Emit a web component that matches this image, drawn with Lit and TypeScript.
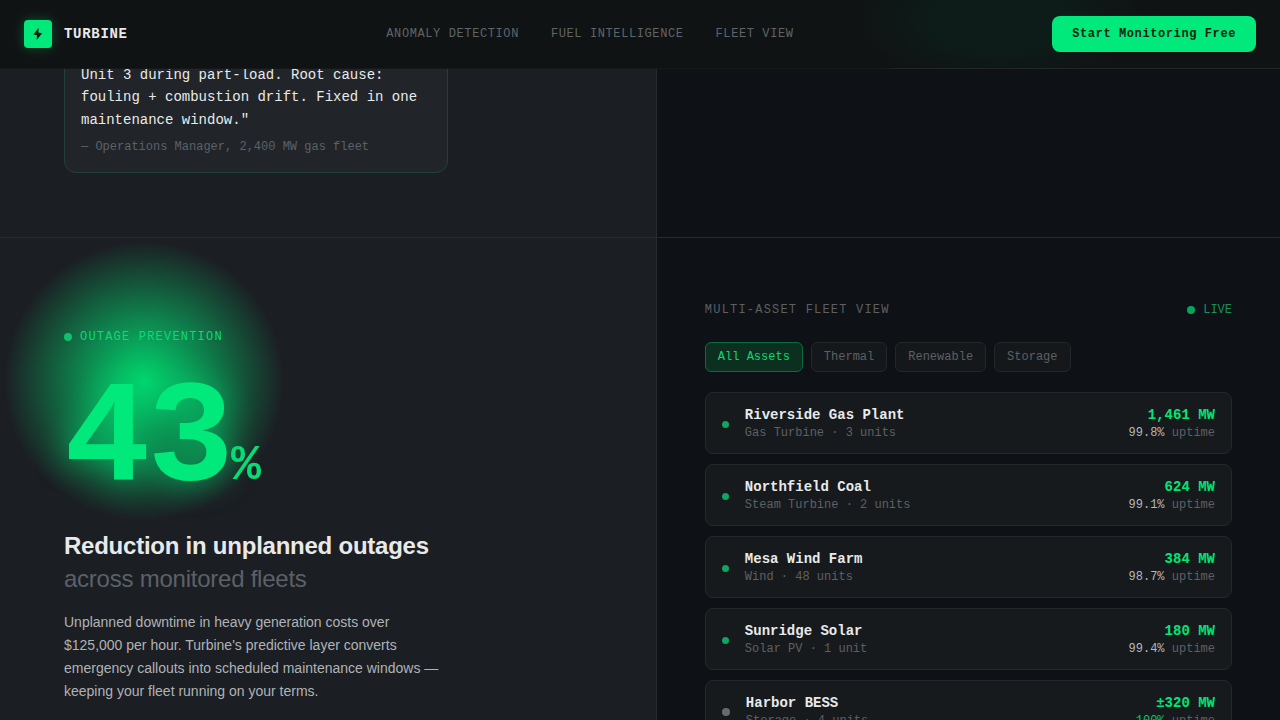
import { LitElement, html, css } from "lit";
import { customElement, property, state } from "lit/decorators.js";
import { classMap } from "lit/directives/class-map.js";

interface Asset {
  name: string;
  kind: string;
  group: string;
  units: string;
  output: string;
  uptime: string;
  idle?: boolean;
}

const ASSETS: Asset[] = [
  { name: "Riverside Gas Plant", kind: "Gas Turbine", group: "Thermal", units: "3 units", output: "1,461 MW", uptime: "99.8%" },
  { name: "Northfield Coal", kind: "Steam Turbine", group: "Thermal", units: "2 units", output: "624 MW", uptime: "99.1%" },
  { name: "Mesa Wind Farm", kind: "Wind", group: "Renewable", units: "48 units", output: "384 MW", uptime: "98.7%" },
  { name: "Sunridge Solar", kind: "Solar PV", group: "Renewable", units: "1 unit", output: "180 MW", uptime: "99.4%" },
  { name: "Harbor BESS", kind: "Storage", group: "Storage", units: "4 units", output: "±320 MW", uptime: "100%", idle: true },
];

const FILTERS = ["All Assets", "Thermal", "Renewable", "Storage"];

@customElement("site-header")
class SiteHeader extends LitElement {
  static styles = css`
    :host {
      display: block;
    }
    .bar {
      display: flex;
      align-items: center;
      justify-content: space-between;
      padding: 16px 24px;
      background:
        radial-gradient(ellipse 140px 64px at 1000px 20px, #0d1c18 0%, #0d1c18 50%, transparent 100%),
        #101314;
      border-bottom: 1px solid;
      border-image: linear-gradient(to right, #15191b 69%, #222625 70%) 1;
    }
    .brand {
      display: flex;
      align-items: center;
      gap: 12px;
      color: #e8eaea;
      font-size: 14px;
      font-weight: 700;
      letter-spacing: 0.05em;
      text-decoration: none;
    }
    .mark {
      display: grid;
      place-items: center;
      width: 28px;
      height: 28px;
      border-radius: 4px;
      background: #00e97a;
      box-shadow: 0 0 12px rgba(0, 233, 122, 0.3);
    }
    .links {
      display: flex;
      gap: 32px;
    }
    .link {
      color: #5f6468;
      font-size: 12px;
      letter-spacing: 0.05em;
      text-decoration: none;
      text-transform: uppercase;
    }
    .cta {
      height: 36px;
      padding: 0 20px;
      border: 0;
      border-radius: 8px;
      background: #00e97a;
      color: #06270f;
      font: 700 12px "Liberation Mono", monospace;
      letter-spacing: 0.05em;
    }
  `;

  render() {
    return html`
      <header class="bar">
        <a class="brand" href="#top">
          <span class="mark">
            <svg width="14" height="14" viewBox="0 0 14 14" aria-hidden="true">
              <path d="M7.6 0.8 L2.4 7.4 L6 8.2 L5.6 13 L11.2 6.3 L7.4 5.6 Z" fill="#06200f" />
            </svg>
          </span>
          <span>TURBINE</span>
        </a>
        <nav class="links">
          <a class="link" href="#anomaly">Anomaly Detection</a>
          <a class="link" href="#fuel">Fuel Intelligence</a>
          <a class="link" href="#fleet">Fleet View</a>
        </nav>
        <button class="cta" type="button">Start Monitoring Free</button>
      </header>
    `;
  }
}

@customElement("asset-card")
class AssetCard extends LitElement {
  @property({ attribute: false }) asset!: Asset;

  static styles = css`
    :host {
      display: block;
    }
    .card {
      display: flex;
      align-items: center;
      gap: 16px;
      padding: 13px 16px 11px;
      border: 1px solid #25292b;
      border-radius: 8px;
      background: #171a1d;
      font-size: 12px;
      line-height: 18px;
      color: #5c6064;
    }
    .dot {
      width: 7px;
      height: 7px;
      border-radius: 50%;
      background: #0fa660;
    }
    .dot.idle {
      width: 8px;
      height: 8px;
      background: #66696e;
    }
    .info {
      flex: 1;
    }
    .name,
    .output {
      font-size: 14px;
      font-weight: 700;
    }
    .name {
      color: #e8eaea;
    }
    .figures {
      text-align: right;
    }
    .output {
      color: #00e676;
    }
    .uptime {
      color: #b4b8ba;
    }
    .uptime.full {
      color: #00c968;
    }
  `;

  render() {
    const a = this.asset;
    return html`
      <div class="card">
        <span class=${classMap({ dot: true, idle: !!a.idle })}></span>
        <div class="info">
          <div class="name">${a.name}</div>
          <div>${a.kind} · ${a.units}</div>
        </div>
        <div class="figures">
          <div class="output">${a.output}</div>
          <div><span class=${classMap({ uptime: true, full: a.uptime === "100%" })}>${a.uptime}</span> uptime</div>
        </div>
      </div>
    `;
  }
}

@customElement("fleet-view")
class FleetView extends LitElement {
  @state() private active = "All Assets";

  static styles = css`
    :host {
      display: block;
      padding: 64px 48px;
      background: #0e1115;
    }
    .head,
    .live,
    .filters {
      display: flex;
      align-items: center;
      gap: 8px;
    }
    .head {
      justify-content: space-between;
      margin-bottom: 24px;
      color: #5c6064;
      font-size: 12px;
      line-height: 16px;
    }
    .title {
      margin: 0;
      font-size: 12px;
      font-weight: 400;
      letter-spacing: 0.1em;
      text-transform: uppercase;
    }
    .live {
      color: #1a8f5a;
    }
    .dot {
      width: 8px;
      height: 8px;
      border-radius: 50%;
      background: #06a75c;
    }
    .filters {
      margin-bottom: 20px;
    }
    .filter {
      height: 30px;
      padding: 0 12px;
      border: 1px solid #232729;
      border-radius: 6px;
      background: #15181b;
      color: #5c6064;
      font: 12px "Liberation Mono", monospace;
    }
    .filter.active {
      border-color: #0b6b40;
      background: #0b3020;
      color: #14d474;
    }
    .assets {
      display: grid;
      gap: 10px;
      margin: 0;
      padding: 0;
      list-style: none;
    }
  `;

  render() {
    const shown = ASSETS.filter((a) => this.active === "All Assets" || a.group === this.active);
    return html`
      <div class="head">
        <h2 class="title">Multi-Asset Fleet View</h2>
        <span class="live"><span class="dot"></span>LIVE</span>
      </div>
      <div class="filters">
        ${FILTERS.map(
          (f) => html`<button
            type="button"
            class=${classMap({ filter: true, active: f === this.active })}
            @click=${() => (this.active = f)}
          >${f}</button>`,
        )}
      </div>
      <ul class="assets">
        ${shown.map((a) => html`<li><asset-card .asset=${a}></asset-card></li>`)}
      </ul>
    `;
  }
}

@customElement("app-root")
class AppRoot extends LitElement {
  static styles = css`
    :host {
      display: flex;
      flex-direction: column;
      height: 100vh;
      overflow: hidden;
      background: #0e1115;
      font-family: "Liberation Mono", monospace;
    }
    .content {
      flex: 1;
      min-height: 0;
      overflow: hidden;
      display: grid;
      grid-template-rows: 169px auto;
    }
    .split {
      display: grid;
      grid-template-columns: 39fr 37fr;
      min-height: 0;
    }
    .split.first {
      border-bottom: 1px solid #282b2e;
    }
    .panel {
      border-right: 1px solid #282b2e;
      background: #1b1e23;
    }
    .story {
      display: flex;
      align-items: flex-end;
      padding: 0 64px 64px;
      overflow: hidden;
    }
    .quote {
      width: 384px;
      box-sizing: border-box;
      margin: 0;
      padding: 16px;
      border: 1px solid #22403a;
      border-radius: 12px;
      background: #212529;
    }
    .words {
      margin: 0 0 8px;
      color: #e8eaea;
      font-size: 14px;
      line-height: 1.6;
    }
    .source {
      color: #5c6168;
      font-size: 12px;
      line-height: 17px;
    }
    .outage {
      padding: 88px 64px 64px;
      background:
        radial-gradient(circle 140px at 144px 143px, rgba(0, 230, 118, 0.92), rgba(0, 230, 118, 0)),
        #1b1e23;
    }
    .eyebrow {
      display: flex;
      align-items: center;
      gap: 8px;
      color: #10d873;
      font-size: 12px;
      line-height: 22px;
      letter-spacing: 0.1em;
      text-transform: uppercase;
    }
    .dot {
      width: 8px;
      height: 8px;
      border-radius: 50%;
      background: #10c06c;
    }
    .stat {
      margin: 24px 0 19px;
      color: #00e97a;
      font-size: 144px;
      font-weight: 700;
      line-height: 138px;
      letter-spacing: -0.02em;
      text-shadow: 0 0 32px rgba(0, 230, 118, 0.6);
    }
    .unit {
      color: #08dc75;
      font-size: 50px;
      line-height: 48px;
      letter-spacing: 0;
      text-shadow: none;
    }
    .headline {
      margin: 0 0 16px;
      color: #e8eaea;
      font: 700 24px/33px "Liberation Sans", sans-serif;
      letter-spacing: -0.01em;
    }
    .muted {
      display: block;
      color: #5c6168;
      font-weight: 400;
    }
    .text {
      max-width: 384px;
      margin: 0;
      color: #b0b3b6;
      font: 14px/23px "Liberation Sans", sans-serif;
    }
  `;

  render() {
    return html`
      <site-header></site-header>
      <main class="content">
        <section class="split first">
          <div class="panel story">
            <figure class="quote">
              <blockquote class="words">
                Unit 3 during part-load. Root cause: fouling + combustion drift. Fixed in one maintenance window."
              </blockquote>
              <figcaption class="source">— Operations Manager, 2,400 MW gas fleet</figcaption>
            </figure>
          </div>
        </section>
        <section class="split">
          <div class="panel outage">
            <div class="eyebrow"><span class="dot"></span>Outage Prevention</div>
            <div class="stat">43<span class="unit">%</span></div>
            <h2 class="headline">Reduction in unplanned outages <span class="muted">across monitored fleets</span></h2>
            <p class="text">
              Unplanned downtime in heavy generation costs over $125,000 per hour. Turbine's predictive layer
              converts emergency callouts into scheduled maintenance windows — keeping your fleet running on your terms.
            </p>
          </div>
          <fleet-view></fleet-view>
        </section>
      </main>
    `;
  }
}
